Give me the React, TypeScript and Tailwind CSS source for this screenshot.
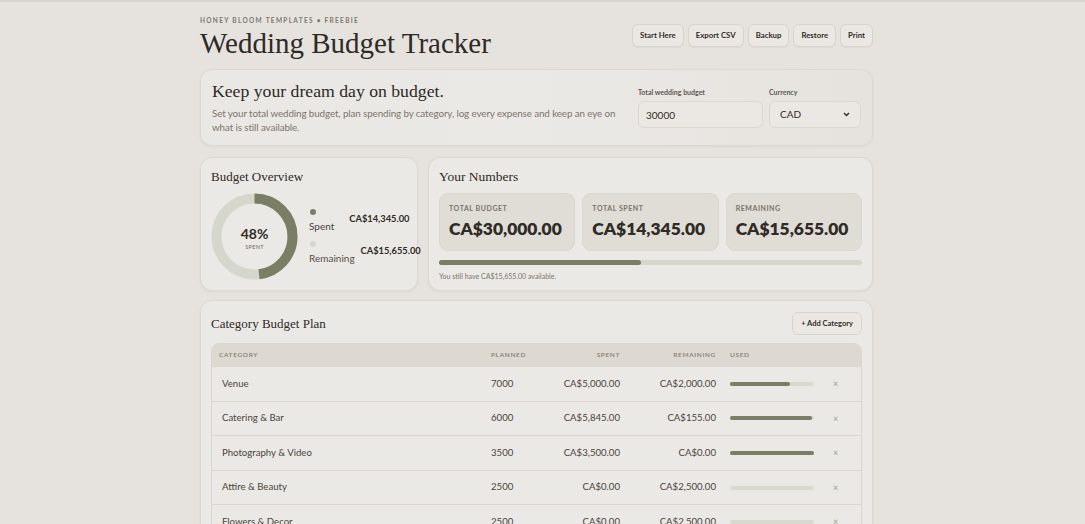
import React from "react";

const actions = ["Start Here", "Export CSV", "Backup", "Restore", "Print"];

const stats = [
  { label: "Total budget", value: "CA$30,000.00" },
  { label: "Total spent", value: "CA$14,345.00" },
  { label: "Remaining", value: "CA$15,655.00" },
];

const categories = [
  { name: "Venue", planned: 7000, spent: 5000 },
  { name: "Catering & Bar", planned: 6000, spent: 5845 },
  { name: "Photography & Video", planned: 3500, spent: 3500 },
  { name: "Attire & Beauty", planned: 2500, spent: 0 },
  { name: "Flowers & Decor", planned: 2500, spent: 0 },
  { name: "Music & Entertainment", planned: 2000, spent: 0 },
];

const money = (n: number) =>
  "CA$" + n.toLocaleString("en-US", { minimumFractionDigits: 2, maximumFractionDigits: 2 });

function Donut({ pct }: { pct: number }) {
  const r = 38;
  const c = 2 * Math.PI * r;
  return (
    <svg width="87" height="87" viewBox="0 0 87 87" className="shrink-0">
      <circle cx="43.5" cy="43.5" r={r} fill="none" stroke="#d5d7cc" strokeWidth="10" />
      <circle
        cx="43.5"
        cy="43.5"
        r={r}
        fill="none"
        stroke="#7a7e64"
        strokeWidth="10"
        strokeDasharray={`${(c * pct) / 100} ${c}`}
        transform="rotate(-90 43.5 43.5)"
      />
      <text x="43.5" y="46" textAnchor="middle" fontSize="14" fontWeight="700" fill="#2f2b27" fontFamily="Lato, sans-serif">
        {pct}%
      </text>
      <text x="43.5" y="56" textAnchor="middle" fontSize="5.5" fill="#6f6960" letterSpacing="0.3" fontFamily="Lato, sans-serif">
        SPENT
      </text>
    </svg>
  );
}

export default function App() {
  return (
    <div className="min-h-screen border-t-2 border-[#d8d5d0] bg-[#e6e3df] pr-[12px] font-['Lato',sans-serif] text-[#2f2b27]">
      <div className="mx-auto w-[673px] pt-[14px] pb-10">
        {/* header */}
        <header className="flex items-start justify-between">
          <div>
            <p className="text-[6.5px] leading-[10px] font-bold uppercase tracking-[0.2em] text-[#7d776f]">
              Honey Bloom Templates • Freebie
            </p>
            <h1 className="font-['Liberation_Serif',serif] text-[29px] leading-[34px] text-[#2e2a26]">
              Wedding Budget Tracker
            </h1>
          </div>
          <div className="mt-[8px] flex gap-[4px]">
            {actions.map((a) => (
              <button
                key={a}
                type="button"
                className="h-[23px] rounded-[6px] border border-[#d8d4cd] bg-[#ebe8e4] px-[7px] text-[7.8px] font-bold text-[#2f2b27] shadow-[0_1px_1px_rgba(0,0,0,0.04)]"
              >
                {a}
              </button>
            ))}
          </div>
        </header>

        {/* hero */}
        <section className="mt-[9px] flex h-[77px] items-center gap-[18px] rounded-[12px] border border-[#dcd8d1] bg-gradient-to-r from-[#eae8e4] via-[#ebe9e6] to-[#e6e3de] px-[11px] shadow-[0_1px_3px_rgba(0,0,0,0.05)]">
          <div className="flex-1">
            <h2 className="font-['Liberation_Serif',serif] text-[17.7px] leading-[21px] text-[#2e2a26]">
              Keep your dream day on budget.
            </h2>
            <p className="mt-[5px] text-[9.8px] leading-[13.5px] tracking-[-0.1px] text-[#7b756c]">
              Set your total wedding budget, plan spending by category, log every expense and keep an eye on what is
              still available.
            </p>
          </div>
          <div className="flex gap-[6px]">
            <label className="flex w-[125px] flex-col">
              <span className="text-[7px] leading-[10px] font-bold text-[#5e5850]">Total wedding budget</span>
              <input
                defaultValue="30000"
                className="mt-[4px] h-[27px] rounded-[6px] border border-[#dcd7cf] bg-[#ebe8e3] px-[7px] text-[10px] text-[#2f2b27] outline-none"
              />
            </label>
            <label className="flex w-[92px] flex-col">
              <span className="text-[7px] leading-[10px] font-bold text-[#5e5850]">Currency</span>
              <div className="mt-[4px] flex h-[27px] items-center justify-between rounded-[6px] border border-[#dcd7cf] bg-[#ebe8e3] px-[10px] text-[10px] text-[#2f2b27]">
                CAD
                <svg width="7" height="5" viewBox="0 0 7 5">
                  <path d="M1 1l2.5 2.5L6 1" fill="none" stroke="#2f2b27" strokeWidth="1.4" />
                </svg>
              </div>
            </label>
          </div>
        </section>

        {/* overview row */}
        <div className="mt-[11px] flex h-[134px] gap-[10px]">
          <section className="w-[218px] shrink-0 rounded-[12px] border border-[#dcd8d1] bg-[#ebe9e5] px-[10px] pt-[10px] shadow-[0_1px_3px_rgba(0,0,0,0.05)]">
            <h3 className="font-['Liberation_Serif',serif] text-[13px] leading-[18px] text-[#2e2a26]">Budget Overview</h3>
            <div className="mt-[7px] flex items-center gap-[11px]">
              <Donut pct={48} />
              <div className="flex flex-col gap-[9px]">
                <div className="flex items-center">
                  <div className="flex flex-col">
                    <span className="ml-[1px] h-[6px] w-[6px] rounded-full bg-[#7a7e64]" />
                    <span className="mt-[5px] text-[10px] leading-[12px] text-[#4a443d]">Spent</span>
                  </div>
                  <span className="ml-[15px] -mt-[3px] text-[9.3px] font-bold text-[#2f2b27]">CA$14,345.00</span>
                </div>
                <div className="flex items-center">
                  <div className="flex flex-col">
                    <span className="ml-[1px] h-[6px] w-[6px] rounded-full bg-[#d5d7cc]" />
                    <span className="mt-[5px] text-[10px] leading-[12px] text-[#5a4f48]">Remaining</span>
                  </div>
                  <span className="ml-[6px] -mt-[3px] whitespace-nowrap text-[9.3px] font-bold text-[#2f2b27]">CA$15,655.00</span>
                </div>
              </div>
            </div>
          </section>

          <section className="flex-1 rounded-[12px] border border-[#dcd8d1] bg-[#ebe9e5] px-[10px] pt-[10px] shadow-[0_1px_3px_rgba(0,0,0,0.05)]">
            <h3 className="font-['Liberation_Serif',serif] text-[13.5px] leading-[18px] text-[#2e2a26]">Your Numbers</h3>
            <div className="mt-[7px] grid grid-cols-3 gap-[7px]">
              {stats.map((s) => (
                <div key={s.label} className="h-[58px] rounded-[9px] border border-[#dbd6cf] bg-[#e0dcd6] px-[9px] pt-[9px]">
                  <p className="text-[7px] leading-[10px] font-bold uppercase tracking-[0.08em] text-[#7a746b]">{s.label}</p>
                  <p className="mt-[4px] text-[17.4px] leading-[24px] font-extrabold text-[#2f2b27]">{s.value}</p>
                </div>
              ))}
            </div>
            <div className="mt-[9px] h-[5px] w-full rounded-full bg-[#d5d7cc]">
              <div className="h-full rounded-full bg-[#7a7e64]" style={{ width: "47.8%" }} />
            </div>
            <p className="mt-[6px] text-[7px] leading-[10px] text-[#7a746b]">You still have CA$15,655.00 available.</p>
          </section>
        </div>

        {/* category plan */}
        <section className="mt-[9px] rounded-[12px] border border-[#dcd8d1] bg-[#ebe9e5] px-[10px] pt-[11px] pb-[12px] shadow-[0_1px_3px_rgba(0,0,0,0.05)]">
          <div className="flex items-center justify-between">
            <h3 className="font-['Liberation_Serif',serif] text-[13px] leading-[18px] text-[#2e2a26]">Category Budget Plan</h3>
            <button
              type="button"
              className="h-[23px] rounded-[6px] border border-[#d8d4cd] bg-[#ebe8e4] px-[8px] text-[7.5px] font-bold text-[#2f2b27]"
            >
              + Add Category
            </button>
          </div>
          <div className="mt-[8px] overflow-hidden rounded-[8px] border border-[#dbd6cf]">
            <div className="grid h-[22px] grid-cols-[269px_65px_84px_90px_104px_1fr] items-center bg-[#ddd8d1] text-[6.5px] font-semibold uppercase tracking-[0.1em] text-[#857e75]">
              <span className="pl-[7px]">Category</span>
              <span className="pl-[10px]">Planned</span>
              <span className="pr-[10px] text-right">Spent</span>
              <span className="pr-[4px] text-right">Remaining</span>
              <span className="pl-[10px]">Used</span>
              <span />
            </div>
            {categories.map((c) => {
              const used = Math.min(100, (c.spent / c.planned) * 100);
              return (
                <div
                  key={c.name}
                  className="grid h-[34.6px] grid-cols-[269px_65px_84px_90px_104px_1fr] items-center border-t border-[#dbd6cf] text-[9.6px] text-[#4a443d]"
                >
                  <span className="pl-[10px]">{c.name}</span>
                  <span className="pl-[10px]">{c.planned}</span>
                  <span className="pr-[10px] text-right">{money(c.spent)}</span>
                  <span className="pr-[4px] text-right">{money(c.planned - c.spent)}</span>
                  <div className="pl-[10px] pr-[10px]">
                    <div className="h-[4px] w-[84px] rounded-full bg-[#d9d9d0]">
                      <div className="h-full rounded-full bg-[#7a7e64]" style={{ width: `${used}%` }} />
                    </div>
                  </div>
                  <span className="pl-[9px] text-[9px] text-[#a09a92]">×</span>
                </div>
              );
            })}
          </div>
        </section>
      </div>
    </div>
  );
}
